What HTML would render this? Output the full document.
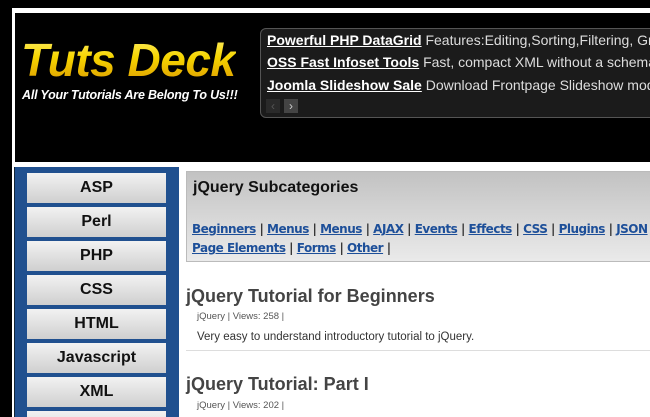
<!DOCTYPE html>
<html style="overflow:hidden;width:650px;height:417px"><head><style>
body{margin:0;width:650px;height:417px;overflow:hidden;background:#000;font-family:"Liberation Sans",Arial,sans-serif;position:relative}
.frame{position:absolute;left:12px;top:8px;width:638px;height:409px;background:#fff}
.hdr{position:absolute;left:15px;top:13px;width:635px;height:149px;background:#000}
.logo{position:absolute;left:21px;top:33px;font:italic bold 46px "Liberation Sans",sans-serif;background:linear-gradient(#fff27a,#f6d500 45%,#d99400);-webkit-background-clip:text;color:transparent;letter-spacing:-0.5px}
.tag{position:absolute;left:22px;top:88px;font:italic bold 12.5px "Liberation Sans",sans-serif;color:#fff;letter-spacing:-0.2px}
.ad{position:absolute;left:260px;top:28px;width:400px;height:88px;background:#1b1b1b;border:1px solid #555;border-radius:6px;overflow:hidden}
.ad div{position:absolute;left:6px;font-size:14px;color:#ddd;white-space:nowrap}
.ad b{color:#fff;text-decoration:underline}
.arr{position:absolute;top:70px;width:14px;height:14px;background:#333;color:#888;font-size:12px;text-align:center;line-height:14px}
.side{position:absolute;left:14px;top:167px;width:164px;height:250px;background:#20508f;border-left:1px solid #123;overflow:hidden}
.btn{position:absolute;left:12px;width:139px;height:30px;background:linear-gradient(#f2f2f2,#cfcfcf);text-align:center;font:bold 16px/30px "Liberation Sans",sans-serif;color:#111}
.content{position:absolute;left:180px;top:167px;width:470px;height:250px;background:#fff}
.sub{position:absolute;left:186px;top:171px;width:470px;height:89px;border:1px solid #bbb;background:linear-gradient(#c2c2c2,#eaeaea)}
.sub h3{margin:0;position:absolute;left:6px;top:7px;font-size:16px;color:#111}
.lk{position:absolute;left:5px;font:bold 12px "DejaVu Sans",sans-serif;color:#333;white-space:nowrap;letter-spacing:-0.5px}
.lk a{color:#1d4f99;text-decoration:underline}
.t{position:absolute;left:186px;font:bold 18px "Liberation Sans",sans-serif;color:#444}
.m{position:absolute;left:197px;font-size:9.5px;color:#555}
.d{position:absolute;left:197px;font-size:11.5px;color:#333}
.clip{position:absolute;left:0;top:0;width:650px;height:417px;overflow:hidden}
</style></head><body><div class="clip">
<div class="frame"></div>
<div class="hdr"></div>
<div class="logo">Tuts Deck</div>
<div class="tag">All Your Tutorials Are Belong To Us!!!</div>
<div class="ad">
<div style="top:3px"><b>Powerful PHP DataGrid</b> Features:Editing,Sorting,Filtering, Grouping</div>
<div style="top:25px"><b>OSS Fast Infoset Tools</b> Fast, compact XML without a schema</div>
<div style="top:48px"><b>Joomla Slideshow Sale</b> Download Frontpage Slideshow module</div>
<span class="arr" style="left:5px;background:#2a2a2a;color:#555">&lsaquo;</span><span class="arr" style="left:23px;background:#444;color:#ccc">&rsaquo;</span>
</div>
<div class="side">
<div class="btn" style="top:6px">ASP</div>
<div class="btn" style="top:40px">Perl</div>
<div class="btn" style="top:74px">PHP</div>
<div class="btn" style="top:108px">CSS</div>
<div class="btn" style="top:142px">HTML</div>
<div class="btn" style="top:176px">Javascript</div>
<div class="btn" style="top:210px">XML</div>
<div class="btn" style="top:244px"></div>
</div>
<div class="content"></div>
<div class="sub"><h3>jQuery Subcategories</h3>
<div class="lk" style="top:50px"><a>Beginners</a> | <a>Menus</a> | <a>Menus</a> | <a>AJAX</a> | <a>Events</a> | <a>Effects</a> | <a>CSS</a> | <a>Plugins</a> | <a>JSON</a></div>
<div class="lk" style="top:69px"><a>Page Elements</a> | <a>Forms</a> | <a>Other</a> |</div>
</div>
<div class="t" style="top:286px">jQuery Tutorial for Beginners</div>
<div class="m" style="top:311px">jQuery | Views: 258 |</div>
<div class="d" style="top:331px">Very easy to understand introductory tutorial to jQuery.</div>
<div style="position:absolute;left:186px;top:350px;width:470px;height:1px;background:#ddd"></div>
<div class="t" style="top:374px">jQuery Tutorial: Part I</div>
<div class="m" style="top:400px">jQuery | Views: 202 |</div>
</div></body></html>
